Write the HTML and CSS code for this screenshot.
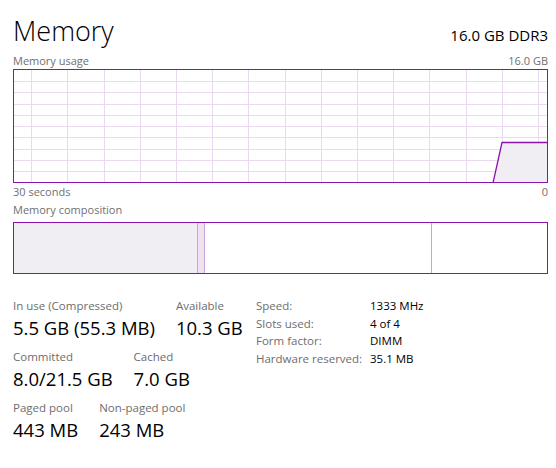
FILE: index.html
```html
<!DOCTYPE html>
<html lang="en">
<head>
    <meta charset="UTF-8">
    <title>Memory</title>
    <link rel="stylesheet" href="styles.css">
</head>
<body>
    <div class="page">
        <div class="header">
            <h1 class="title">Memory</h1>
            <span class="model">16.0 GB DDR3</span>
        </div>

        <div class="caption-row usage">
            <span>Memory usage</span>
            <span>16.0 GB</span>
        </div>
        <div class="graph">
            <svg width="533" height="112" viewBox="0 0 533 112">
                <g class="grid">
                    <line x1="17.5" y1="0" x2="17.5" y2="112"/>
                    <line x1="53.5" y1="0" x2="53.5" y2="112"/>
                    <line x1="90.5" y1="0" x2="90.5" y2="112"/>
                    <line x1="126.5" y1="0" x2="126.5" y2="112"/>
                    <line x1="162.5" y1="0" x2="162.5" y2="112"/>
                    <line x1="198.5" y1="0" x2="198.5" y2="112"/>
                    <line x1="234.5" y1="0" x2="234.5" y2="112"/>
                    <line x1="271.5" y1="0" x2="271.5" y2="112"/>
                    <line x1="307.5" y1="0" x2="307.5" y2="112"/>
                    <line x1="343.5" y1="0" x2="343.5" y2="112"/>
                    <line x1="379.5" y1="0" x2="379.5" y2="112"/>
                    <line x1="415.5" y1="0" x2="415.5" y2="112"/>
                    <line x1="452.5" y1="0" x2="452.5" y2="112"/>
                    <line x1="488.5" y1="0" x2="488.5" y2="112"/>
                    <line x1="524.5" y1="0" x2="524.5" y2="112"/>
                    <line x1="0" y1="11.5" x2="533" y2="11.5"/>
                    <line x1="0" y1="22.5" x2="533" y2="22.5"/>
                    <line x1="0" y1="34.5" x2="533" y2="34.5"/>
                    <line x1="0" y1="45.5" x2="533" y2="45.5"/>
                    <line x1="0" y1="56.5" x2="533" y2="56.5"/>
                    <line x1="0" y1="67.5" x2="533" y2="67.5"/>
                    <line x1="0" y1="79.5" x2="533" y2="79.5"/>
                    <line x1="0" y1="90.5" x2="533" y2="90.5"/>
                    <line x1="0" y1="101.5" x2="533" y2="101.5"/>
                </g>
                <polygon class="usage-fill" points="479,113 488,72.5 534,72.5 534,113"/>
                <polyline class="usage-line" points="479,113 488,72.5 534,72.5"/>
            </svg>
        </div>
        <div class="caption-row axis">
            <span>30 seconds</span>
            <span>0</span>
        </div>

        <div class="caption-row">
            <span>Memory composition</span>
        </div>
        <div class="composition">
            <div class="seg in-use"></div>
            <div class="seg modified"></div>
            <div class="seg standby"></div>
            <div class="seg free"></div>
        </div>

        <div class="stats">
            <div class="stats-left">
                <div class="stat-row">
                    <div class="stat">
                        <div class="label">In use (Compressed)</div>
                        <div class="value">5.5 GB (55.3 MB)</div>
                    </div>
                    <div class="stat">
                        <div class="label">Available</div>
                        <div class="value">10.3 GB</div>
                    </div>
                </div>
                <div class="stat-row">
                    <div class="stat">
                        <div class="label">Committed</div>
                        <div class="value">8.0/21.5 GB</div>
                    </div>
                    <div class="stat">
                        <div class="label">Cached</div>
                        <div class="value">7.0 GB</div>
                    </div>
                </div>
                <div class="stat-row">
                    <div class="stat">
                        <div class="label">Paged pool</div>
                        <div class="value">443 MB</div>
                    </div>
                    <div class="stat">
                        <div class="label">Non-paged pool</div>
                        <div class="value">243 MB</div>
                    </div>
                </div>
            </div>

            <div class="specs">
                <span class="spec-label">Speed:</span>
                <span class="spec-value">1333 MHz</span>
                <span class="spec-label">Slots used:</span>
                <span class="spec-value">4 of 4</span>
                <span class="spec-label">Form factor:</span>
                <span class="spec-value">DIMM</span>
                <span class="spec-label">Hardware reserved:</span>
                <span class="spec-value">35.1 MB</span>
            </div>
        </div>
    </div>
</body>
</html>
```

FILE: styles.css
```css
body {
    margin: 0;
    background: #fff;
    color: #000;
    font-family: "Segoe UI", "Open Sans", "Noto Sans", sans-serif;
}

.page {
    width: 535px;
    padding: 14px 0 0 13px;
}

/* Header */
.header {
    display: flex;
    justify-content: space-between;
    align-items: baseline;
    height: 38px;
}

.title {
    margin: 0;
    font-size: 27px;
    font-weight: 300;
    line-height: 34px;
}

.model {
    font-size: 15px;
}

/* Small captions above and below the charts */
.caption-row {
    display: flex;
    justify-content: space-between;
    font-size: 11px;
    line-height: 15px;
    color: #707070;
}

.caption-row.usage {
    line-height: 17px;
}

.caption-row.axis {
    margin-top: 1px;
    margin-bottom: 3px;
}

/* Usage graph */
.graph {
    border: 1px solid #8b12ae;
    height: 112px;
}

.graph svg {
    display: block;
}

.grid line {
    stroke: #ebd9f1;
    stroke-width: 1;
    shape-rendering: crispEdges;
}

.usage-fill {
    fill: #f1eef3;
}

.usage-line {
    fill: none;
    stroke: #8b12ae;
    stroke-width: 1.3;
}

/* Composition bar */
.composition {
    display: flex;
    border: 1px solid #8b12ae;
    height: 50px;
    margin-top: 5px;
}

.seg.in-use {
    width: 183px;
    background: #f1eef3;
}

.seg.modified {
    width: 6px;
    background: #eee2f1;
    border-left: 1px solid #c9a3d9;
    border-right: 1px solid #c9a3d9;
}

.seg.standby {
    width: 226px;
    border-right: 1px solid #c9a3d9;
}

.seg.free {
    flex: 1;
}

/* Stats */
.stats {
    display: flex;
    align-items: flex-start;
    margin-top: 23px;
}

.stats-left {
    width: 243px;
}

.stat-row {
    display: flex;
    gap: 21px;
    margin-bottom: 7px;
}

.label {
    font-size: 11.5px;
    line-height: 18px;
    color: #6d6d6d;
}

.value {
    font-size: 18.5px;
    line-height: 26px;
}

.specs {
    display: grid;
    grid-template-columns: 114px auto;
    font-size: 11.5px;
    line-height: 17.7px;
}

.spec-label {
    color: #6d6d6d;
}
```
